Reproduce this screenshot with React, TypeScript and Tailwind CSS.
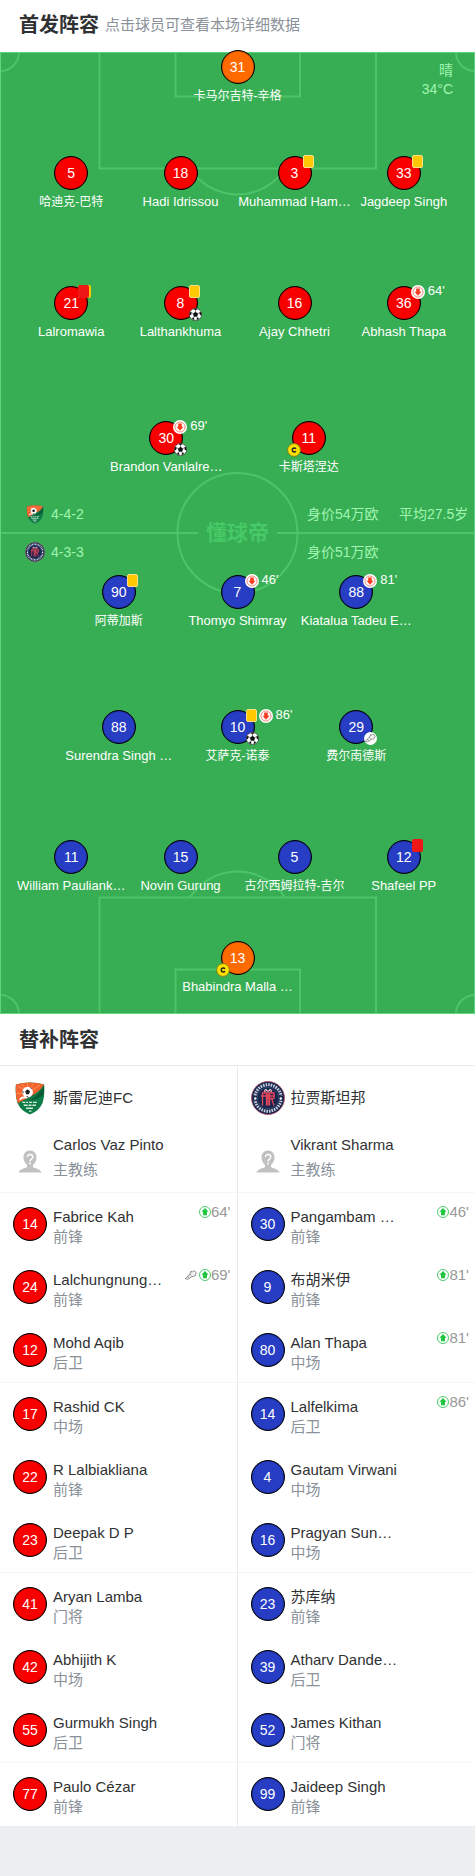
import React from "react";

type Badge = "yellow" | "red" | "secondYellow" | "off";
type Tone = "red" | "blue" | "orange";

interface Starter {
  no: number;
  name: string;
  badges?: Badge[];
  minute?: string;
  corner?: "goal" | "assist" | "captain";
  keeper?: boolean;
}

interface Sub {
  no: number;
  name: string;
  role: string;
  minute?: string;
  assist?: boolean;
}

const HOME_LINES: Starter[][] = [
  [{ no: 31, name: "卡马尔吉特-辛格", keeper: true }],
  [
    { no: 5, name: "哈迪克-巴特" },
    { no: 18, name: "Hadi Idrissou" },
    { no: 3, name: "Muhammad Ham…", badges: ["yellow"] },
    { no: 33, name: "Jagdeep Singh", badges: ["yellow"] },
  ],
  [
    { no: 21, name: "Lalromawia", badges: ["secondYellow"] },
    { no: 8, name: "Lalthankhuma", badges: ["yellow"], corner: "goal" },
    { no: 16, name: "Ajay Chhetri" },
    { no: 36, name: "Abhash Thapa", badges: ["off"], minute: "64'" },
  ],
  [
    { no: 30, name: "Brandon Vanlalre…", badges: ["off"], minute: "69'", corner: "goal" },
    { no: 11, name: "卡斯塔涅达", corner: "captain" },
  ],
];

const AWAY_LINES: Starter[][] = [
  [
    { no: 90, name: "阿蒂加斯", badges: ["yellow"] },
    { no: 7, name: "Thomyo Shimray", badges: ["off"], minute: "46'" },
    { no: 88, name: "Kiatalua Tadeu E…", badges: ["off"], minute: "81'" },
  ],
  [
    { no: 88, name: "Surendra Singh …" },
    { no: 10, name: "艾萨克-诺泰", badges: ["yellow", "off"], minute: "86'", corner: "goal" },
    { no: 29, name: "费尔南德斯", corner: "assist" },
  ],
  [
    { no: 11, name: "William Pauliank…" },
    { no: 15, name: "Novin Gurung" },
    { no: 5, name: "古尔西姆拉特-吉尔" },
    { no: 12, name: "Shafeel PP", badges: ["red"] },
  ],
  [{ no: 13, name: "Bhabindra Malla …", keeper: true, corner: "captain" }],
];

const HOME_SUBS: Sub[] = [
  { no: 14, name: "Fabrice Kah", role: "前锋", minute: "64'" },
  { no: 24, name: "Lalchungnung…", role: "前锋", minute: "69'", assist: true },
  { no: 12, name: "Mohd Aqib", role: "后卫" },
  { no: 17, name: "Rashid CK", role: "中场" },
  { no: 22, name: "R Lalbiakliana", role: "前锋" },
  { no: 23, name: "Deepak D P", role: "后卫" },
  { no: 41, name: "Aryan Lamba", role: "门将" },
  { no: 42, name: "Abhijith K", role: "中场" },
  { no: 55, name: "Gurmukh Singh", role: "后卫" },
  { no: 77, name: "Paulo Cézar", role: "前锋" },
];

const AWAY_SUBS: Sub[] = [
  { no: 30, name: "Pangambam …", role: "前锋", minute: "46'" },
  { no: 9, name: "布胡米伊", role: "前锋", minute: "81'" },
  { no: 80, name: "Alan Thapa", role: "中场", minute: "81'" },
  { no: 14, name: "Lalfelkima", role: "后卫", minute: "86'" },
  { no: 4, name: "Gautam Virwani", role: "中场" },
  { no: 16, name: "Pragyan Sun…", role: "中场" },
  { no: 23, name: "苏库纳", role: "前锋" },
  { no: 39, name: "Atharv Dande…", role: "后卫" },
  { no: 52, name: "James Kithan", role: "门将" },
  { no: 99, name: "Jaideep Singh", role: "前锋" },
];

const TONES: Record<Tone, string> = {
  red: "bg-[#f90000]",
  blue: "bg-[#263dc4]",
  orange: "bg-[#ff6a00]",
};

const LINE_GRIDS: Record<number, string> = {
  1: "grid-cols-1",
  2: "grid-cols-2 px-[20%]",
  3: "grid-cols-3 px-[12.5%]",
  4: "grid-cols-[22fr_24fr_24fr_22fr] px-[4%]",
};

const HAN = /[\u4e00-\u9fff]/;

/* ---------- icons ---------- */

function OffIcon() {
  return (
    <svg className="size-[14px] shrink-0" viewBox="0 0 14 14">
      <circle cx="7" cy="7" r="7" fill="#fff" />
      <circle cx="7" cy="7" r="5" fill="none" stroke="#f0705c" strokeWidth="0.8" />
      <path d="M5.2 3.4h3.6v3.4h1.700L7 10.800 3.500 6.800h1.700z" fill="#fa3c1e" />
    </svg>
  );
}

function OnIcon() {
  return (
    <svg className="size-3 shrink-0" viewBox="0 0 12 12">
      <circle cx="6" cy="6" r="5.5" fill="#fff" stroke="#3cc45c" strokeWidth="0.9" />
      <path d="M6 2 9.600 5.700H8v3.600H4V5.700H2.400z" fill="#1fc741" />
    </svg>
  );
}

function BallIcon() {
  return (
    <svg className="size-[13px]" viewBox="0 0 26 26">
      <circle cx="13" cy="13" r="12.3" fill="#fff" stroke="#333" strokeWidth="1.4" />
      <path d="M13 7.6l5.2 3.8-2 6.1H9.8l-2-6.1z" fill="#111" />
      <path
        d="M8.6 2.2 13 4.6l4.4-2.4L13 .8zM2 8.2l3.6.7L4.2 14 .8 14.6zM24 8.2l-3.6.7 1.4 5.1 3.4.6zM5.6 19.4l4.6.4.6 4.4-3-1zM20.4 19.4l-4.6.4-.6 4.4 3-1z"
        fill="#111"
      />
      <path d="M13 4.6v3M5.6 8.9l2.2 2.5M20.4 8.9l-2.2 2.5M9.8 17.5l-1 2.2M16.2 17.5l1 2.2" stroke="#111" strokeWidth="1.3" />
    </svg>
  );
}

function BootShape() {
  return (
    <g stroke="#777" strokeWidth="1.5" strokeLinejoin="round" strokeLinecap="round">
      <path d="M13 6c2 .6 3.800 0 5-1.800l4.600 4c-1.500 1.400-2 3.200-2.200 5-2 1.400-4.200 1.600-6.200 1.800-3 1.600-5 4.400-8 4.600-2 .1-3.600-.4-3.600-1.600C6.400 15.600 10.600 12 13 6z" fill="#f2f2f2" />
      <path d="M10.500 10.500l2.500 2.200M6.500 14.500l2.500 1.800" fill="none" />
    </g>
  );
}

function AssistIcon() {
  return (
    <svg className="size-[13px]" viewBox="0 0 26 26">
      <circle cx="13" cy="13" r="13" fill="#fff" />
      <BootShape />
    </svg>
  );
}

function BootIcon() {
  return (
    <svg className="h-[10px] w-3" viewBox="2 3 21.500 18">
      <BootShape />
    </svg>
  );
}

function CaptainIcon() {
  return (
    <svg className="size-[14px]" viewBox="0 0 14 14">
      <circle cx="7" cy="7" r="6.400" fill="#ffe100" stroke="#7a7a10" strokeWidth="0.900" />
      <path d="M9 5.700Q8.400 5 7.300 5 5.300 5 5.300 7t2 2Q8.400 9 9 8.300" fill="none" stroke="#222" strokeWidth="1.400" />
    </svg>
  );
}

function HomeCrest({ className }: { className: string }) {
  return (
    <svg className={className} viewBox="0 0 60 68" role="img" aria-label="斯雷尼迪FC">
      <path d="M1 5Q30-3 59 5q2 24-3 38Q49 60 30 67 11 60 4 43-1 29 1 5z" fill="#0d7c46" />
      <path d="M1 5Q30-3 59 5 50 20 34 28 20 36 5 44-1 28 1 5z" fill="#f4622f" />
      <path d="M18 16 5 9M20 13 13 4M25 11 25 2M31 13 37 3M34 17 51 6M14 23 3 24" stroke="#ffa05c" strokeWidth="1.600" />
      <path d="M59 7Q48 30 26 38q20 0 32-12 1-9 1-19z" fill="#0a5c36" />
      <circle cx="25" cy="21" r="11" fill="#fff" />
      <path d="M25 15l5 4-2 6h-6l-2-6zM15 17l2 4-2 4zM34 15l-3-2 1-2zM20 31l5-2 3 3z" fill="#222" />
      <path d="M8 34q8-7 18-3l-3 3q-7-2-14 4z" fill="#fff" />
      <path d="M14 42h6m2 0h4m2 0h6m2 0h8M17 48h8m2 0h6m2 0h7M22 54h14M28 60h5" stroke="#d6ecdc" strokeWidth="3" />
    </svg>
  );
}

function AwayCrest({ className }: { className: string }) {
  return (
    <svg className={className} viewBox="0 0 68 68" role="img" aria-label="拉贾斯坦邦">
      <circle cx="34" cy="34" r="33" fill="#16254c" stroke="#b5506a" strokeWidth="1.600" />
      <circle cx="34" cy="34" r="26.500" fill="none" stroke="#c9cede" strokeWidth="6" strokeDasharray="3.200 2" pathLength="166" />
      <path d="M4 30h9v9H4zM55 30h9v9h-9z" fill="#16254c" />
      <circle cx="8.500" cy="35" r="2.500" fill="#fff" />
      <circle cx="59.500" cy="35" r="2.500" fill="#fff" />
      <circle cx="34" cy="34" r="21.500" fill="#16254c" stroke="#5a6487" strokeWidth="1" />
      <path d="M23 49V24h8v25M31 35h6M37 49V24h9v11h-9M41 35l5 14M27 18v6M34 18v31M41 18v6M20 30h28" fill="none" stroke="#e8455a" strokeWidth="2.600" />
      <path d="M28 22v-5h3v3h6v-3h3v5" fill="none" stroke="#fff" strokeWidth="1.500" />
    </svg>
  );
}

function CoachAvatar() {
  return (
    <svg className="h-[23px] w-6" viewBox="0 0 48 46" aria-hidden="true">
      <path d="M24 1c8 0 13 6 13 14 0 6-3 12-7 15v4c2 3 15 3 17 11H1c2-8 15-8 17-11v-4c-4-3-7-9-7-15C11 7 16 1 24 1z" fill="#c1c1c1" />
      <path d="M19 14c0-7 10.500-6.500 10.500 0 0 4-5.500 4.500-5.500 9" fill="none" stroke="#fff" strokeWidth="2.800" />
      <circle cx="24" cy="27" r="1.900" fill="#fff" />
    </svg>
  );
}

/* ---------- pitch ---------- */

function PitchMarkings() {
  return (
    <svg className="absolute inset-0 size-full" viewBox="0 0 475 962" preserveAspectRatio="none" aria-hidden="true">
      <g fill="none" stroke="#4dc469" strokeWidth="2">
        <path d="M99.500 0v116.500h276.500V0M175.500 0v44.500h124.500V0" />
        <path d="M99.500 962V845.500h276.500V962M175.500 962v-44.500h124.500V962" />
        <path d="M190 116.500a56.500 56.500 0 0 0 95 0M190 845.500a56.500 56.500 0 0 1 95 0" />
        <path d="M0 19A19 19 0 0 0 19 0M475 19A19 19 0 0 1 456 0M0 943a19 19 0 0 1 19 19M475 943a19 19 0 0 0-19 19" />
        <circle cx="237.500" cy="481" r="60" />
        <path d="M0 481h198M277 481h198" />
      </g>
      <path d="M.5 .5h474v961H.5z" fill="none" stroke="#5fd57d" strokeWidth="1" />
    </svg>
  );
}

function Disc({ no, tone }: { no: number; tone: Tone }) {
  return (
    <span
      className={`flex size-[34px] shrink-0 items-center justify-center rounded-full border border-black text-[14px] leading-none text-white shadow-[inset_0_0_1px_#000] ${TONES[tone]}`}
    >
      {no}
    </span>
  );
}

function Card({ badge }: { badge: Badge }) {
  if (badge === "off") return <OffIcon />;
  if (badge === "secondYellow") {
    return (
      <span className="flex h-[13px] w-[13px] rounded-xs bg-[#ffc800]">
        <span className="h-[13px] w-[11px] rounded-xs bg-[#ee1616]" />
      </span>
    );
  }
  return (
    <span
      className={
        badge === "yellow"
          ? "ml-px h-[13px] w-[11px] rounded-xs border border-[#ffe08a] bg-[#ffc800]"
          : "ml-px h-[13px] w-[11px] rounded-xs bg-[#ee1616]"
      }
    />
  );
}

function PitchPlayer({ player, tone }: { player: Starter; tone: Tone }) {
  return (
    <button type="button" className="flex h-14 min-w-0 cursor-pointer flex-col items-center gap-0.5 text-white">
      <span className="relative">
        <Disc no={player.no} tone={player.keeper ? "orange" : tone} />
        {player.badges && (
          <span className="absolute -top-px left-6 flex items-start gap-0.5">
            {player.badges.map((b) => (
              <Card key={b} badge={b} />
            ))}
            {player.minute && <span className="pl-px text-[13px] leading-3">{player.minute}</span>}
          </span>
        )}
        {player.corner === "goal" && (
          <span className="absolute top-[22px] left-[25px]">
            <BallIcon />
          </span>
        )}
        {player.corner === "assist" && (
          <span className="absolute top-[22px] left-[25px]">
            <AssistIcon />
          </span>
        )}
        {player.corner === "captain" && (
          <span className="absolute top-[22px] -left-[5px]">
            <CaptainIcon />
          </span>
        )}
      </span>
      <span className={`leading-5 whitespace-nowrap ${HAN.test(player.name) ? "text-[12px]" : "text-[13px]"}`}>{player.name}</span>
    </button>
  );
}

function PitchLine({ players, tone, className }: { players: Starter[]; tone: Tone; className: string }) {
  return (
    <div className={`grid ${LINE_GRIDS[players.length]} ${className}`}>
      {players.map((p) => (
        <PitchPlayer key={p.no} player={p} tone={tone} />
      ))}
    </div>
  );
}

function TeamInfo({ crest, formation, value, age }: { crest: React.ReactNode; formation: string; value: string; age?: string }) {
  return (
    <div className="flex h-[38px] items-center pr-1.5 pl-6 text-[14px] text-[#a0f5b2]">
      <span className="flex w-[22px] justify-center">{crest}</span>
      <span className="flex-1 pl-[5px]">{formation}</span>
      <span className="w-[92px]">{value}</span>
      <span className="w-[70px] whitespace-nowrap">{age}</span>
    </div>
  );
}

/* ---------- bench ---------- */

function BenchRow({ sub, tone, divider }: { sub: Sub; tone: Tone; divider: boolean }) {
  return (
    <li className={divider ? "border-b border-[#f6f6f6]" : ""}>
      <button type="button" className="flex h-[63px] w-full cursor-pointer items-start pt-[14px] pr-[6px] pl-[13px] text-left">
        <Disc no={sub.no} tone={tone} />
        <span className="flex min-w-0 flex-1 flex-col pl-[6px] text-[15px] leading-5 whitespace-nowrap">
          <span className="text-[#303133]">{sub.name}</span>
          <span className="text-[#8a9199]">{sub.role}</span>
        </span>
        {sub.minute && (
          <span className="-mt-[3px] flex h-4 items-center text-[15px] leading-4 text-[#999]">
            {sub.assist && (
              <span className="pr-0.5">
                <BootIcon />
              </span>
            )}
            <OnIcon />
            <span>{sub.minute}</span>
          </span>
        )}
      </button>
    </li>
  );
}

function Bench({ crest, team, coach, subs, tone }: { crest: React.ReactNode; team: string; coach: string; subs: Sub[]; tone: Tone }) {
  return (
    <section className="min-w-0">
      <div className="flex h-[64px] items-center pl-[13px]">
        <span className="flex w-[34px] justify-center">{crest}</span>
        <h3 className="pl-[6px] text-[15px] text-[#303133]">{team}</h3>
      </div>
      <div className="flex h-[63px] items-start border-b border-[#f6f6f6] pl-[13px]">
        <span className="flex w-[34px] justify-center pt-5">
          <CoachAvatar />
        </span>
        <div className="flex flex-col pt-0.5 pl-[6px] text-[15px] leading-[25px] whitespace-nowrap">
          <span className="text-[#303133]">{coach}</span>
          <span className="text-[#8a9199]">主教练</span>
        </div>
      </div>
      <ul>
        {subs.map((s, i) => (
          <BenchRow key={s.no} sub={s} tone={tone} divider={i % 3 === 2} />
        ))}
      </ul>
    </section>
  );
}

export default function App() {
  return (
    <div className="min-h-screen bg-[#edeef0] font-['Liberation_Sans','Noto_Sans_CJK_SC',sans-serif]">
      <main className="bg-white">
        <header className="flex h-[52px] items-center gap-1.5 px-[19px] pb-0.5">
          <h1 className="text-[20px] font-bold text-[#303133]">首发阵容</h1>
          <p className="text-[15px] text-[#8a9199]">点击球员可查看本场详细数据</p>
        </header>

        <section className="relative flex flex-col bg-[#37ae53] pb-[17px]">
          <PitchMarkings />
          <div className="absolute top-[9px] right-[22px] text-right text-[14px] leading-[19px] text-[#a0f5b2]">
            <p>晴</p>
            <p>34°C</p>
          </div>
          <div className="absolute inset-0 flex items-center justify-center text-[21px] font-bold text-[#46c966]">懂球帝</div>

          <div className="relative -mt-0.5 flex flex-col">
            <PitchLine players={HOME_LINES[0]} tone="red" className="" />
            <PitchLine players={HOME_LINES[1]} tone="red" className="mt-[50px]" />
            <PitchLine players={HOME_LINES[2]} tone="red" className="mt-[74px]" />
            <PitchLine players={HOME_LINES[3]} tone="red" className="mt-[79px]" />
            <div className="pt-[18px] pb-1">
              <TeamInfo crest={<HomeCrest className="h-[19px] w-[18px]" />} formation="4-4-2" value="身价54万欧" age="平均27.5岁" />
              <TeamInfo crest={<AwayCrest className="size-5" />} formation="4-3-3" value="身价51万欧" />
            </div>
            <PitchLine players={AWAY_LINES[0]} tone="blue" className="" />
            <PitchLine players={AWAY_LINES[1]} tone="blue" className="mt-[79px]" />
            <PitchLine players={AWAY_LINES[2]} tone="blue" className="mt-[74px]" />
            <PitchLine players={AWAY_LINES[3]} tone="blue" className="mt-[45px]" />
          </div>
        </section>

        <header className="flex h-[51px] items-center px-[19px]">
          <h2 className="text-[20px] font-bold text-[#303133]">替补阵容</h2>
        </header>
        <div className="grid grid-cols-2 divide-x divide-[#ebebeb] border-t border-[#ebebeb]">
          <Bench crest={<HomeCrest className="h-[33px] w-[30px]" />} team="斯雷尼迪FC" coach="Carlos Vaz Pinto" subs={HOME_SUBS} tone="red" />
          <Bench crest={<AwayCrest className="size-[34px]" />} team="拉贾斯坦邦" coach="Vikrant Sharma" subs={AWAY_SUBS} tone="blue" />
        </div>
      </main>
    </div>
  );
}
